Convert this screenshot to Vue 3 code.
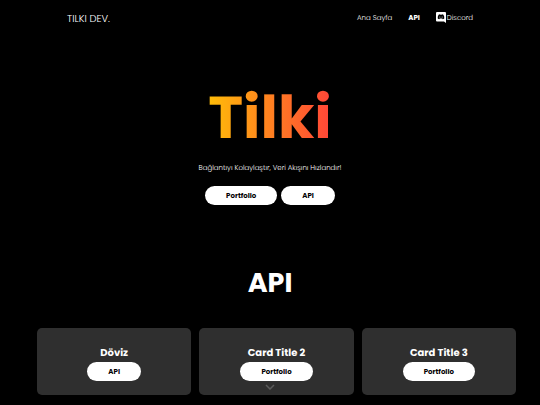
<script setup>
const heroLinks = ['Portfolio', 'API']
const cards = [
  { title: 'Döviz', action: 'API' },
  { title: 'Card Title 2', action: 'Portfolio' },
  { title: 'Card Title 3', action: 'Portfolio' },
]
</script>

<template>
  <div class="page">
    <header class="nav">
      <a class="brand" href="#">TILKI DEV.</a>
      <nav class="links">
        <a href="#home">Ana Sayfa</a>
        <a href="#api" class="active">API</a>
        <a href="#discord" class="discord">
          <svg viewBox="0 0 20 22" aria-hidden="true">
            <path fill="#fff" d="M2 0H18Q20 0 20 2V22L16 19H2Q0 19 0 17V2Q0 0 2 0Z" />
            <path fill="#000" d="M5.2 5.3 8 4.4l.7 1h2.6l.7-1 2.8.9c1.5 2.4 2 5 1.7 7.8-1 .8-2 1.2-3.1 1.4l-.8-1.3H7.4l-.8 1.3c-1.1-.2-2.1-.6-3.1-1.4-.3-2.8.2-5.4 1.7-7.8Z" />
            <circle cx="7.7" cy="10" r="1" fill="#fff" />
            <circle cx="12.3" cy="10" r="1" fill="#fff" />
          </svg>
          <span>Discord</span>
        </a>
      </nav>
    </header>
    <main>
      <section class="hero">
        <h1>Tilki</h1>
        <p>Bağlantıyı Kolaylaştır, Veri Akışını Hızlandır!</p>
        <div class="actions">
          <button v-for="label in heroLinks" :key="label" type="button" class="pill">{{ label }}</button>
        </div>
      </section>
      <section id="api" class="api">
        <h2>API</h2>
        <div class="cards">
          <article v-for="card in cards" :key="card.title" class="card">
            <h3>{{ card.title }}</h3>
            <button type="button" class="pill">{{ card.action }}</button>
          </article>
        </div>
      </section>
    </main>
    <a class="scroll" href="#api" aria-label="API">
      <svg viewBox="0 0 10 6" aria-hidden="true">
        <path d="M1 1 5 5 9 1" fill="none" stroke="#5c5c5c" stroke-width="1.5" />
      </svg>
    </a>
  </div>
</template>

<style>
body {
  background: #000;
}
</style>

<style scoped>
.page {
  position: relative;
  box-sizing: border-box;
  min-height: 100vh;
  background: #000;
  color: #fff;
  font-family: Poppins, Inter, sans-serif;
  font-size: 7px;
  font-weight: 300;
  text-rendering: geometricPrecision;
}
a {
  color: inherit;
  text-decoration: none;
}
h1, h2, h3, p {
  margin: 0;
}
.nav {
  display: flex;
  align-items: center;
  justify-content: space-between;
  height: 38px;
  padding: 0 67px;
}
.brand {
  font-size: 10px;
  line-height: 12px;
}
.links {
  display: flex;
  align-items: center;
  gap: 16px;
}
.active {
  font-weight: 700;
}
.discord {
  display: flex;
  align-items: center;
  gap: 1px;
}
.discord svg {
  width: 10px;
  height: 11px;
  margin-bottom: 3px;
}
.hero {
  display: flex;
  flex-direction: column;
  align-items: center;
  padding-top: 38px;
}
h1 {
  font-size: 59px;
  line-height: 84px;
  font-weight: 700;
  background: linear-gradient(to right, #ffbd08, #ff4438);
  -webkit-background-clip: text;
  background-clip: text;
  color: transparent;
}
.hero p {
  margin: 4px 0 12px;
  line-height: 10px;
}
.actions {
  display: flex;
  gap: 4px;
}
.pill {
  border: 0;
  border-radius: 10px;
  height: 19px;
  padding: 0 21px;
  background: #fff;
  color: #000;
  font: inherit;
  font-weight: 700;
}
.api {
  padding: 59px 0 10px;
}
h2 {
  font-size: 27px;
  line-height: 40px;
  font-weight: 700;
  text-align: center;
}
.cards {
  display: grid;
  grid-template-columns: repeat(3, 1fr);
  gap: 8px;
  margin: 24px 24px 0 37px;
}
.card {
  display: flex;
  flex-direction: column;
  align-items: center;
  padding: 16px 8px 14px;
  border-radius: 5px;
  background: #2f2f2f;
}
h3 {
  font-size: 10px;
  line-height: 18px;
}
.scroll {
  position: absolute;
  left: 50%;
  top: 384px;
  transform: translateX(-50%);
  line-height: 0;
}
.scroll svg {
  width: 10px;
  height: 6px;
}
</style>
